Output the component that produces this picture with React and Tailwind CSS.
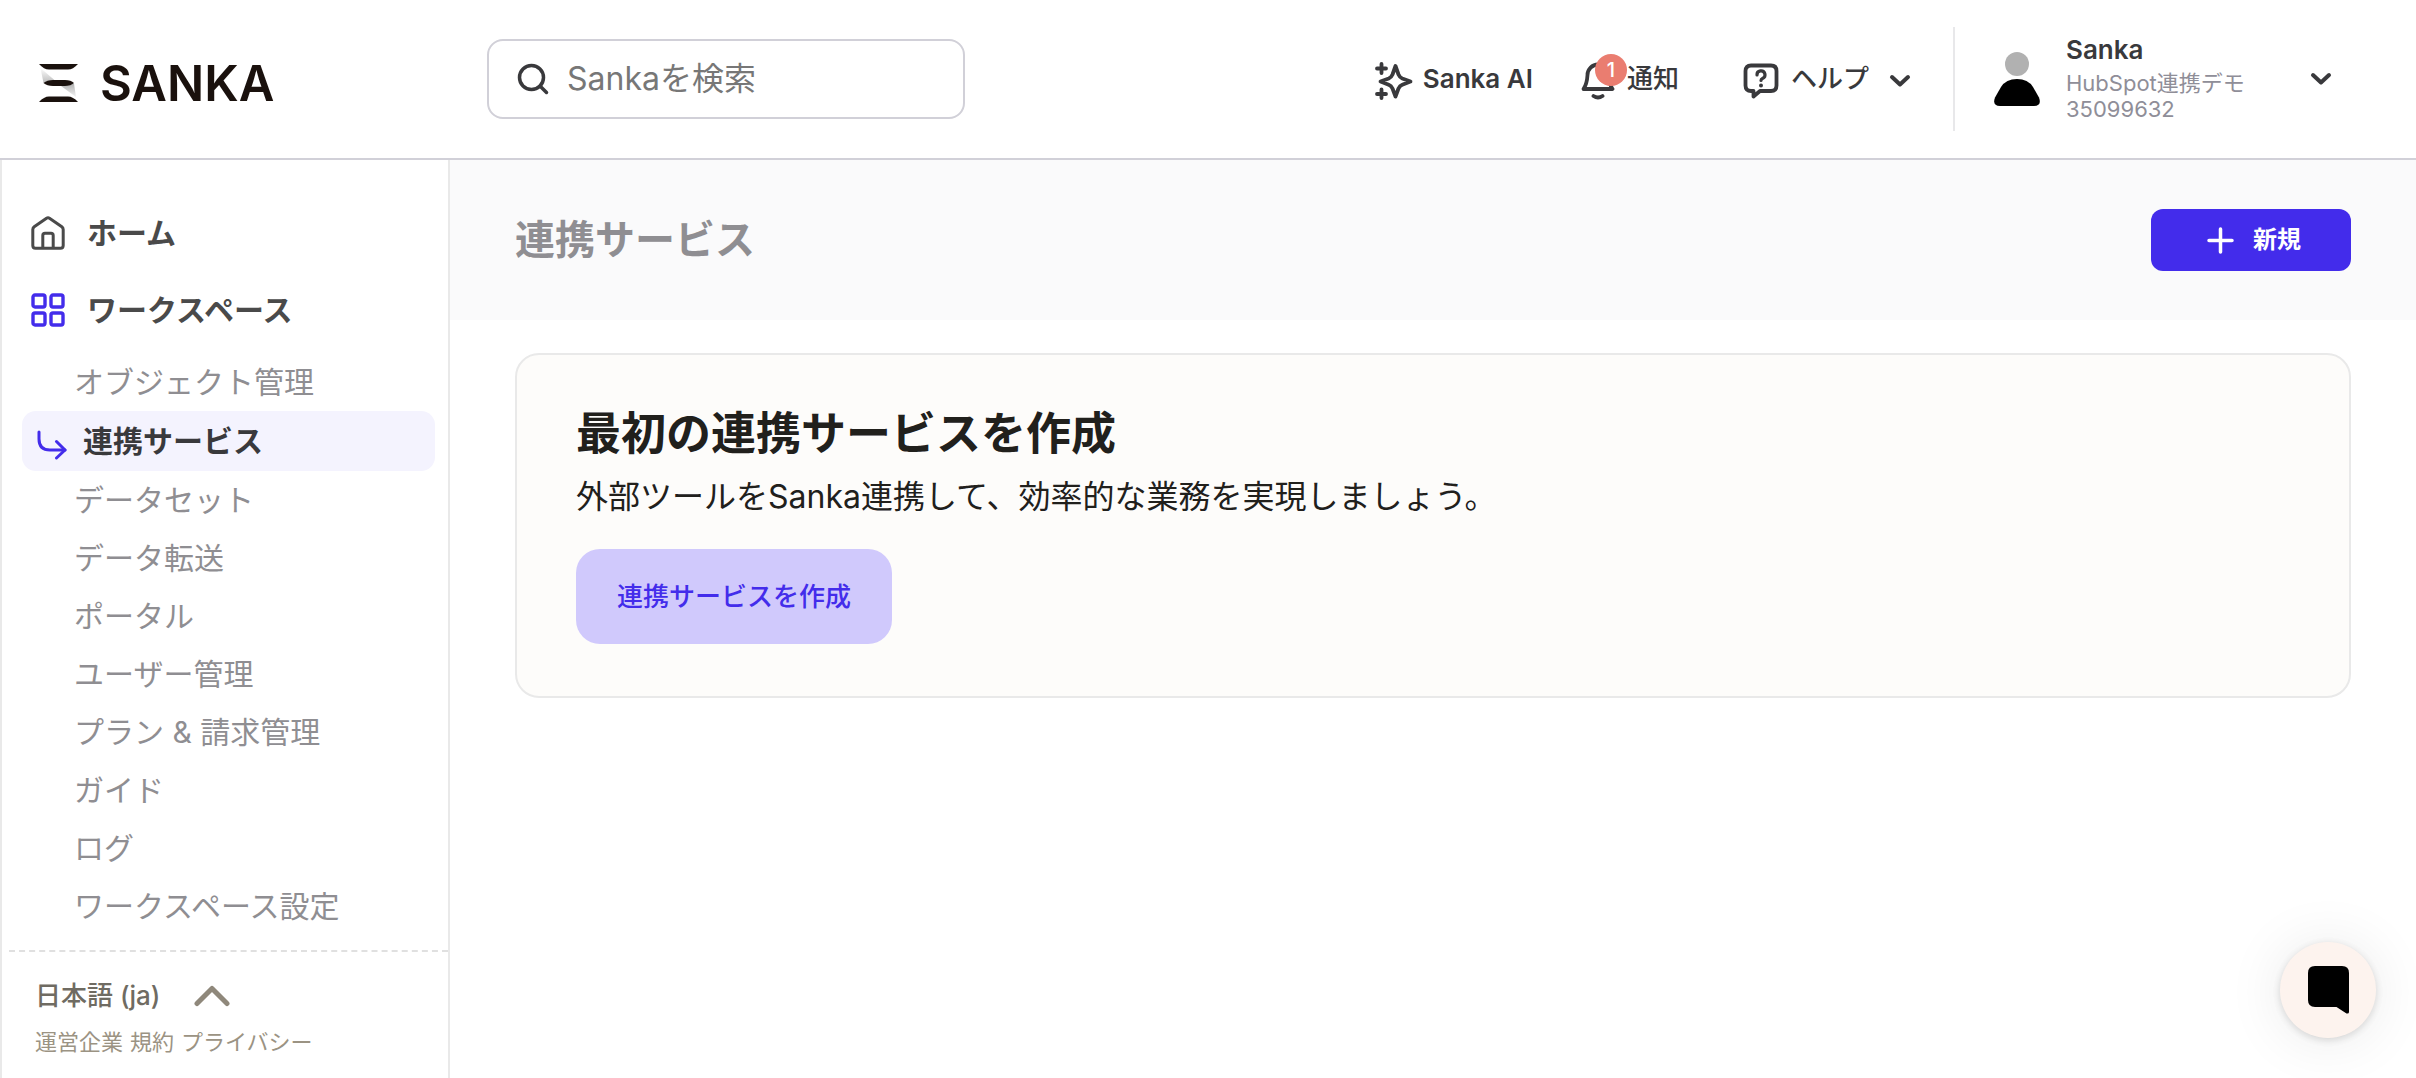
const subItems = [
  "オブジェクト管理",
  "連携サービス",
  "データセット",
  "データ転送",
  "ポータル",
  "ユーザー管理",
  "プラン & 請求管理",
  "ガイド",
  "ログ",
  "ワークスペース設定",
];

function LogoMark() {
  return (
    <svg width="39" height="38" viewBox="0 0 39 38" aria-hidden="true">
      <defs>
        <linearGradient id="fadeA" x1="0" y1="0" x2="0" y2="1">
          <stop offset="0" stopColor="#fff" />
          <stop offset="1" stopColor="#bbb" />
        </linearGradient>
        <linearGradient id="fadeB" x1="0" y1="0" x2="0" y2="1">
          <stop offset="0" stopColor="#b0b0b0" />
          <stop offset="1" stopColor="#f4f4f4" />
        </linearGradient>
      </defs>
      <path d="M1.500 4 L16 16.500 Q8 16 4.500 19 Z" fill="url(#fadeA)" />
      <path d="M22 22 Q31 22 35 19.500 L37 33 Z" fill="url(#fadeB)" />
      <path d="M0 0 H39 Q34 5.500 29 5.500 H10 Q5 5.500 0 0 Z" fill="#1a110d" />
      <path d="M4.500 19 Q8 16 14 16 H26 Q32 16 35 19 Q32 22 26 22 H14 Q8 22 4.500 19 Z" fill="#1a110d" />
      <path d="M0 38 H39 Q34 32.500 29 32.500 H10 Q5 32.500 0 38 Z" fill="#1a110d" />
    </svg>
  );
}

function SearchIcon() {
  return (
    <svg width="32" height="32" viewBox="0 0 32 32" fill="none" stroke="#39393c" strokeWidth="3.500" aria-hidden="true">
      <circle cx="14.500" cy="14.500" r="12" />
      <path d="M23 23 L29.500 29.500" strokeLinecap="round" />
    </svg>
  );
}

function SparkleIcon() {
  return (
    <svg width="38" height="38" viewBox="0 0 38 38" fill="none" stroke="#39393c" strokeWidth="3.800" strokeLinecap="round" strokeLinejoin="round" aria-hidden="true">
      <path d="M20.500 4 L23.500 12.500 Q24.800 15.500 27.300 16.500 L35.500 19.500 L27.300 22.700 Q24.800 23.700 23.500 26.500 L20.500 34.500 L17.500 26.500 Q16.200 23.700 13.700 22.700 L5.500 19.500 L13.700 16.500 Q16.200 15.500 17.500 12.500 Z" />
      <path d="M6.500 2 V11 M2 6.500 H11 M6.500 27.500 V36 M2 32 H11" />
    </svg>
  );
}

function BellIcon() {
  return (
    <svg width="34" height="38" viewBox="0 0 34 38" fill="none" stroke="#39393c" strokeWidth="3.800" strokeLinecap="round" strokeLinejoin="round" aria-hidden="true">
      <path d="M2.500 27 Q6 22 6.500 13 A10.500 10.500 0 0 1 27.500 13 Q28 22 31.500 27 Z" />
      <path d="M12.500 34 Q17 37 21.500 34" />
    </svg>
  );
}

function HelpIcon() {
  return (
    <svg width="36" height="36" viewBox="0 0 36 36" fill="none" stroke="#39393c" strokeWidth="3.800" strokeLinecap="round" strokeLinejoin="round" aria-hidden="true">
      <path d="M8 2.500 H28 Q33.500 2.500 33.500 8 V22.500 Q33.500 28 28 28 H17 L10.500 33.500 V28 H8 Q2.500 28 2.500 22.500 V8 Q2.500 2.500 8 2.500 Z" />
      <path d="M14 12 A4 4 0 1 1 19.500 15.500 Q18 16.200 18 17.500" strokeWidth="3.200" />
      <circle cx="18" cy="22.500" r="2" fill="#39393c" stroke="none" />
    </svg>
  );
}

function ChevronIcon() {
  return (
    <svg width="22" height="14" viewBox="0 0 22 14" fill="none" stroke="#39393c" strokeWidth="4" strokeLinecap="round" strokeLinejoin="round" aria-hidden="true">
      <path d="M3 3 L11 10.500 L19 3" />
    </svg>
  );
}

function HomeIcon() {
  return (
    <svg width="34" height="34" viewBox="0 0 34 34" fill="none" stroke="#4a4a4a" strokeWidth="3" strokeLinejoin="round" aria-hidden="true">
      <path d="M1.800 13.500 Q1.800 11.800 3.200 10.700 L15.500 2.200 Q17 1.200 18.500 2.200 L30.800 10.700 Q32.200 11.800 32.200 13.500 V29.500 Q32.200 32.200 29.500 32.200 H4.500 Q1.800 32.200 1.800 29.500 Z" />
      <path d="M11.800 32 V19.500 Q11.800 17.300 14 17.300 H20 Q22.200 17.300 22.200 19.500 V32" />
    </svg>
  );
}

function GridIcon() {
  return (
    <svg width="34" height="34" viewBox="0 0 34 34" fill="none" stroke="#432ceb" strokeWidth="3.400" aria-hidden="true">
      <rect x="2" y="2" width="12" height="12" rx="2" />
      <rect x="20" y="2" width="12" height="12" rx="2" />
      <rect x="2" y="20" width="12" height="12" rx="2" />
      <rect x="20" y="20" width="12" height="12" rx="2" />
    </svg>
  );
}

function TurnIcon() {
  return (
    <svg width="30" height="30" viewBox="0 0 30 30" fill="none" stroke="#432ceb" strokeWidth="3" strokeLinecap="round" strokeLinejoin="round" aria-hidden="true">
      <path d="M2 2 V9 Q2 20 13 20 H28" />
      <path d="M19.500 11.500 L28 20 L19.500 28" />
    </svg>
  );
}

function Header() {
  return (
    <header className="flex h-40 shrink-0 items-center border-b-2 border-[#d1d0d8] pr-[84px] pl-[39px]">
      <a href="#top" className="mt-2 flex w-[448px] shrink-0 items-center gap-[22px]">
        <LogoMark />
        <span className="text-[49px] leading-none font-semibold text-[#1a110d]">SANKA</span>
      </a>
      <label className="flex h-20 w-[478px] items-center gap-[18px] rounded-2xl border-2 border-[#d1d0d8] px-7">
        <SearchIcon />
        <input
          type="text"
          aria-label="検索"
          placeholder="Sankaを検索"
          className="min-w-0 flex-1 bg-transparent text-[32px] leading-10 outline-none placeholder:text-[#777777]"
        />
      </label>
      <nav className="ml-auto flex items-center text-[26px] leading-8 font-medium text-[#39393c]">
        <button type="button" className="flex items-center gap-2.5">
          <span className="mt-1"><SparkleIcon /></span>
          <span className="font-semibold">Sanka AI</span>
        </button>
        <button type="button" className="relative ml-12 flex items-center gap-3">
          <span className="mt-1"><BellIcon /></span>
          <span className="absolute -top-1 left-3.5 flex size-8 items-center justify-center rounded-full bg-[#ea7d70] text-xl leading-none text-white">1</span>
          通知
        </button>
        <button type="button" className="ml-16 flex items-center gap-3">
          <span className="mt-1"><HelpIcon /></span>
          ヘルプ
          <span className="ml-2 mt-1"><ChevronIcon /></span>
        </button>
      </nav>
      <button type="button" className="ml-[42px] flex h-26 items-center border-l-2 border-[#e8e8ea] pl-[39px] text-left">
        <svg width="46" height="54" viewBox="0 0 46 54" aria-hidden="true">
          <circle cx="23" cy="12" r="12" fill="#b1b1b1" />
          <path d="M23 27 Q34 27 39 35 L45 45.500 Q48 54 40 54 H6 Q-2 54 1 45.500 L7 35 Q12 27 23 27 Z" fill="#000" />
        </svg>
        <span className="ml-[26px] flex w-[244px] flex-col pb-0.5 text-[22px] leading-[26px] text-[#8f8e98]">
          <span className="mb-1 text-[26px] leading-8 font-semibold text-[#39393c]">Sanka</span>
          <span>HubSpot連携デモ</span>
          <span>35099632</span>
        </span>
        <ChevronIcon />
      </button>
    </header>
  );
}

function Sidebar() {
  return (
    <aside className="flex w-[450px] shrink-0 flex-col border-x-2 border-[#e9e9e9]">
      <nav className="flex flex-1 flex-col pt-[34px] text-[30px] leading-[58px] text-[#8f8e92]">
        <a href="#home" className="flex h-[77px] items-center gap-[22px] pl-[29px] font-semibold text-[#4a4a4a]">
          <HomeIcon />
          ホーム
        </a>
        <a href="#workspace" className="flex h-[77px] items-center gap-[22px] pl-[29px] font-semibold text-[#4a4a4a]">
          <GridIcon />
          ワークスペース
        </a>
        <ul className="pt-[5px] pr-[13px] pl-5">
          {subItems.map((label) =>
            label === "連携サービス" ? (
              <li key={label}>
                <a href="#item" aria-current="page" className="flex h-[60px] items-center gap-4 rounded-[14px] bg-[#f4f3fe] pl-[15px] font-semibold text-[#39393c]">
                  <span className="mt-2"><TurnIcon /></span>
                  {label}
                </a>
              </li>
            ) : (
              <li key={label}>
                <a href="#item" className="block pl-[52px]">{label}</a>
              </li>
            )
          )}
        </ul>
      </nav>
      <footer className="ml-[7px] border-t-2 border-dashed border-[#e0e0e0] pb-5 pl-[26px]">
        <button type="button" className="mt-[26px] flex items-center gap-[34px] text-[26px] leading-9 font-medium text-[#6f6b62]">
          日本語 (ja)
          <svg width="36" height="22" viewBox="0 0 36 22" fill="none" stroke="#8f887b" strokeWidth="5" strokeLinecap="round" strokeLinejoin="round" aria-hidden="true">
            <path d="M3 18.500 L18 3.500 L33 18.500" />
          </svg>
        </button>
        <div className="mt-3 flex gap-[7px] text-[22px] leading-8 text-[#9b9383]">
          <a href="#company">運営企業</a>
          <a href="#terms">規約</a>
          <a href="#privacy">プライバシー</a>
        </div>
      </footer>
    </aside>
  );
}

export default function App() {
  return (
    <div lang="ja" className="flex min-h-screen flex-col bg-white font-['Inter','Noto_Sans_CJK_JP',sans-serif]">
      <Header />
      <div className="flex flex-1">
        <Sidebar />
        <main className="min-w-0 flex-1">
          <div className="flex h-40 items-center justify-between bg-[#fafafb] px-[65px]">
            <h1 className="text-[40px] leading-none font-semibold text-[#8f8e92]">連携サービス</h1>
            <button type="button" className="flex h-[62px] w-[200px] items-center justify-center gap-[19px] rounded-xl bg-[#432ceb] pl-1.5 text-2xl font-bold text-white">
              <svg width="27" height="27" viewBox="0 0 27 27" fill="none" stroke="#fff" strokeWidth="3.500" strokeLinecap="round" aria-hidden="true">
                <path d="M13.500 2 V25 M2 13.500 H25" />
              </svg>
              新規
            </button>
          </div>
          <section className="mx-[65px] mt-[33px] rounded-3xl border-2 border-[#e9e9e9] bg-[#fdfcfa] px-[59px] pt-[46px] pb-[52px] text-[#21201c]">
            <h2 className="text-[45px] leading-[66px] font-semibold">最初の連携サービスを作成</h2>
            <p className="mt-1.5 text-[32px] leading-12">外部ツールをSanka連携して、効率的な業務を実現しましょう。</p>
            <button type="button" className="mt-7 h-[95px] rounded-3xl bg-[#d0c9fc] px-[41px] text-[26px] font-medium text-[#432ceb]">
              連携サービスを作成
            </button>
          </section>
        </main>
      </div>
      <button type="button" aria-label="チャット" className="fixed right-10 bottom-10 flex size-24 items-center justify-center rounded-full bg-[#fdf3ee] shadow-[0_2px_8px_rgba(0,0,0,0.15),0_2px_60px_rgba(0,0,0,0.09)]">
        <svg width="41" height="48" viewBox="0 0 41 48" aria-hidden="true">
          <path d="M7 0 H34 Q41 0 41 7 V46 Q41 48 38.500 47.500 L28.500 41 H7 Q0 41 0 34 V7 Q0 0 7 0 Z" fill="#000" />
        </svg>
      </button>
    </div>
  );
}
